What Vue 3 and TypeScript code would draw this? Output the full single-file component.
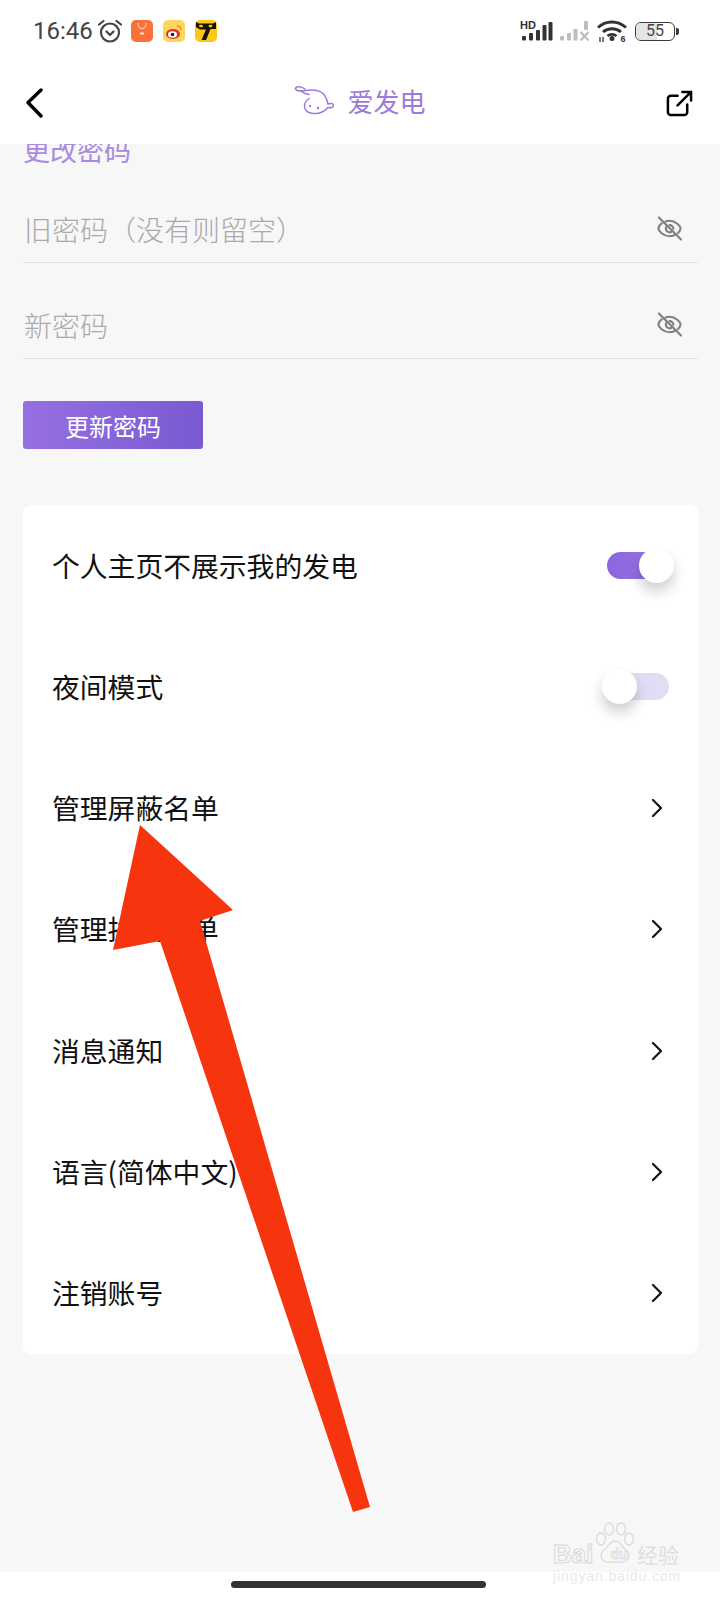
<script setup lang="ts">
const fields = ['旧密码（没有则留空）', '新密码']

const toggles = [
  { label: '个人主页不展示我的发电', on: true },
  { label: '夜间模式', on: false },
]

const links = ['管理屏蔽名单', '管理拦截名单', '消息通知', '语言(简体中文)', '注销账号']
</script>

<template>
  <div class="page">
    <div class="status-bar">
      <div class="status-left">
        <span class="time">16:46</span>
        <svg class="alarm" width="26" height="26" viewBox="0 0 26 26" fill="none" stroke="#444" stroke-width="2.2" stroke-linecap="round" stroke-linejoin="round">
          <circle cx="13" cy="14.5" r="9" />
          <path d="M9.5 13.5l3.5 3.5 3.5-3.5" />
          <path d="M2 6.5l4.5-3.5M24 6.5L19.5 3" />
        </svg>
        <svg class="app-icon" width="22" height="22" viewBox="0 0 22 22">
          <rect width="22" height="22" rx="5" fill="#fa7239" />
          <path d="M7 3c0 4 1.500 5.500 4 5.500S15 7 15 3" fill="none" stroke="#fff" stroke-width="1" opacity=".85" />
          <rect x="9" y="12.500" width="4" height="2" fill="#fff" opacity=".8" />
        </svg>
        <svg class="app-icon" width="22" height="22" viewBox="0 0 22 22">
          <rect width="22" height="22" rx="5" fill="#fbd760" />
          <ellipse cx="10" cy="14" rx="7" ry="5" fill="#e0322c" />
          <ellipse cx="9.500" cy="14.500" rx="4.500" ry="3.200" fill="#fff" />
          <circle cx="9.500" cy="14.500" r="1.800" fill="#222" />
          <path d="M14 6c2.500 0 4 1.500 4 4" fill="none" stroke="#f08a24" stroke-width="1.400" />
        </svg>
        <svg class="app-icon" width="22" height="22" viewBox="0 0 22 22">
          <rect width="22" height="22" rx="5" fill="#fbc914" />
          <path d="M1 2l3 1.500h14L21 2v7h-5.500L11 20H6.500l4.500-10.500H5L1 7z" fill="#15130c" />
          <ellipse cx="6" cy="6" rx="2" ry="1.200" fill="#fbc914" />
          <ellipse cx="15.500" cy="6" rx="2" ry="1.200" fill="#fbc914" />
        </svg>
      </div>
      <div class="status-right">
        <svg width="33" height="22" viewBox="0 0 33 22">
          <text x="0" y="9" class="hd">HD</text>
          <g fill="#333">
            <rect x="2" y="16" width="4" height="4.500" rx="1" />
            <rect x="9" y="13" width="4" height="7.500" rx="1" />
            <rect x="16" y="10" width="4" height="10.500" rx="1" />
            <rect x="22.500" y="5" width="4" height="15.500" rx="1" />
            <rect x="28.500" y="2" width="4" height="18.500" rx="1" />
          </g>
        </svg>
        <svg width="32" height="22" viewBox="0 0 32 22">
          <g fill="#bdbdbd">
            <rect x="1" y="16" width="4" height="4.500" rx="1" />
            <rect x="8" y="13" width="4" height="7.500" rx="1" />
            <rect x="14.500" y="9" width="4" height="11.500" rx="1" />
            <rect x="25" y="1" width="4" height="9" rx="1" />
          </g>
          <path d="M21.500 12l8 8.500M29.500 12l-8 8.500" stroke="#bdbdbd" stroke-width="2.200" />
        </svg>
        <svg width="30" height="24" viewBox="0 0 30 24" fill="none" stroke="#333" stroke-width="3">
          <path d="M1 8.500c7.500-7.500 20-7.500 28 0" />
          <path d="M6 13c5-4.500 13-4.500 18 0" />
          <path d="M10.500 17c2.500-2.200 6.500-2.200 9 0" stroke-width="2.600" />
          <circle cx="15" cy="19.500" r="1" fill="#333" />
          <path d="M3 18v5M6 23v-5" stroke-width="1.300" />
          <text x="23.500" y="23" class="wifi-six">6</text>
        </svg>
        <div class="battery">
          <div class="battery-body">
            <div class="battery-fill"></div>
            <span class="battery-text">55</span>
          </div>
          <div class="battery-nub"></div>
        </div>
      </div>
    </div>

    <div class="nav-bar">
      <svg class="nav-back" width="20" height="30" viewBox="0 0 20 30" fill="none" stroke="#000" stroke-width="3.400" stroke-linecap="round" stroke-linejoin="round">
        <path d="M16 2L3 14.500 16 28" />
      </svg>
      <div class="nav-title">
        <svg width="42" height="32" viewBox="0 0 42 32" fill="none" stroke="#9b7ad8" stroke-width="1.500" stroke-linecap="round" stroke-linejoin="round">
          <path d="M11 5C7 2 2 2 1.500 4.500 1.500 7 6 7.500 12 6.500c7-1 14-.5 18 4 3 3.500 3.500 8 4 9.500 2.500-1 5-.500 5.500 1 .5 2-2.500 3-5.500 2.500-3.500 4-9 6.500-14.500 6-5.500-.5-9-3-9-7.500 0-3 1.500-5.500 4.500-7.500" />
          <path d="M7 6.500c1.500 2 4.500 3.500 8 4" />
          <circle cx="16" cy="22" r=".5" fill="#9b7ad8" />
          <circle cx="24" cy="24" r=".5" fill="#9b7ad8" />
        </svg>
        <span>爱发电</span>
      </div>
      <svg class="nav-share" width="27" height="27" viewBox="0 0 28 28" fill="none" stroke="#000" stroke-width="2.600" stroke-linecap="round" stroke-linejoin="round">
        <path d="M12 6H5a3 3 0 0 0-3 3v14a3 3 0 0 0 3 3h14a3 3 0 0 0 3-3v-8" />
        <path d="M12 16L26 2M17 2h9v9" />
      </svg>
    </div>

    <div class="content">
      <div class="section-title">更改密码</div>
      <div v-for="field in fields" :key="field" class="field">
        <span class="placeholder">{{ field }}</span>
        <svg width="25" height="25" viewBox="0 0 26 26" fill="none" stroke="#7f7f7f" stroke-width="2.200" stroke-linecap="round" stroke-linejoin="round">
          <path d="M5 7.500C2.500 9.500 1.500 11.500 1.500 13c0 2.500 5 8 11.500 8 2.500 0 4.500-.7 6.500-2" />
          <path d="M9 5.800c1.200-.5 2.600-.8 4-.8 6.500 0 11.500 5.500 11.500 8 0 1.300-1 3-2.700 4.600" />
          <path d="M9.500 11.500a4 4 0 0 0 5.500 5M13 9.500a4 4 0 0 1 4 4" />
          <path d="M2 1.500l23 23" />
        </svg>
      </div>
      <button class="update-btn">更新密码</button>

      <div class="card">
        <div v-for="item in toggles" :key="item.label" class="row">
          <span>{{ item.label }}</span>
          <div class="switch" :class="{ on: item.on }">
            <div class="knob"></div>
          </div>
        </div>
        <div v-for="link in links" :key="link" class="row">
          <span>{{ link }}</span>
          <svg class="row-arrow" width="14" height="20" viewBox="0 0 14 20" fill="none" stroke="#111" stroke-width="2.200" stroke-linecap="round" stroke-linejoin="round">
            <path d="M3 2l8 8-8 8" />
          </svg>
        </div>
      </div>
    </div>

    <div class="home-bar">
      <div class="home-pill"></div>
    </div>

    <svg class="arrow" width="720" height="1600" viewBox="0 0 720 1600">
      <polygon points="140,825 233,910 200,921 370,1507 353,1512 160,941 113,950" fill="#f6350f" />
    </svg>

    <div class="watermark">
      <svg class="paw" width="40" height="48" viewBox="0 0 40 48" fill="none" stroke="#dcdcdc" stroke-width="1.300">
        <ellipse cx="6" cy="17" rx="4.500" ry="6" />
        <ellipse cx="14" cy="7" rx="4.500" ry="6" />
        <ellipse cx="26" cy="7" rx="4.500" ry="6" />
        <ellipse cx="34" cy="17" rx="4.500" ry="6" />
        <path d="M20 19c-5 0-6 5-10 8-4 3-5 6-3 10 3 5 9 3 13 3s10 2 13-3c2-4 1-7-3-10-4-3-5-8-10-8z" />
      </svg>
      <div class="wm-main">
        <span class="wm-bai">Bai</span>
        <span class="wm-du">du</span>
        <span class="wm-cn">经验</span>
      </div>
      <div class="wm-url">jingyan.baidu.com</div>
    </div>
  </div>
</template>

<style>
html,
body {
  margin: 0;
  background: #fff;
}
</style>

<style scoped>
.page {
  position: relative;
  width: 720px;
  height: 1600px;
  display: flex;
  flex-direction: column;
  overflow: hidden;
  background: #fff;
  font-family: "Noto Sans CJK SC", "Noto Sans", sans-serif;
}

.status-bar {
  height: 62px;
  flex: none;
  display: flex;
  align-items: center;
  justify-content: space-between;
  padding: 0 41px 0 33px;
}

.status-left,
.status-right {
  display: flex;
  align-items: center;
}

.time {
  font-family: Roboto, sans-serif;
  font-size: 24px;
  color: #444;
  width: 65px;
}

.alarm {
  margin-right: 8px;
  margin-left: -1px;
}

.app-icon {
  margin-right: 10px;
}

.status-right {
  gap: 6px;
}

.hd {
  font-family: "Liberation Sans", sans-serif;
  font-size: 11px;
  font-weight: 700;
  fill: #333;
}

.wifi-six {
  font-family: "Liberation Sans", sans-serif;
  font-size: 9px;
  font-weight: 700;
  fill: #333;
  stroke: none;
}

.battery {
  display: flex;
  align-items: center;
  margin-left: 2px;
}

.battery-body {
  position: relative;
  width: 40px;
  height: 19px;
  box-sizing: border-box;
  border: 1.500px solid #3a3a3a;
  border-radius: 6px;
  overflow: hidden;
}

.battery-fill {
  width: 55%;
  height: 100%;
  background: #e4e4e4;
}

.battery-text {
  position: absolute;
  inset: 0;
  text-align: center;
  font-family: Roboto, sans-serif;
  font-size: 16px;
  line-height: 16px;
  color: #444;
}

.battery-nub {
  width: 3px;
  height: 7px;
  margin-left: 1px;
  background: #3a3a3a;
  border-radius: 0 2px 2px 0;
}

.nav-bar {
  height: 82px;
  flex: none;
  display: flex;
  align-items: center;
  justify-content: space-between;
  padding: 0 27px 0 25px;
  position: relative;
  z-index: 1;
  background: #fff;
}

.nav-title {
  display: flex;
  align-items: center;
  gap: 11px;
  margin: 0 0 6px 9px;
  font-size: 26px;
  color: #9b7ad8;
}

.content {
  flex: 1;
  padding: 0 22px 0 23px;
  background: #f7f7f7;
  overflow: hidden;
}

.section-title {
  height: 28px;
  margin-top: -8px;
  font-size: 27px;
  line-height: 28px;
  color: #a88ae0;
}

.field {
  height: 96px;
  box-sizing: border-box;
  padding: 28px 16px 0 1px;
  display: flex;
  align-items: center;
  justify-content: space-between;
  border-bottom: 1px solid #e3e3e3;
}

.section-title + .field {
  margin-top: 3px;
}

.placeholder {
  font-size: 28px;
  font-weight: 300;
  color: #a9a9a9;
}

.update-btn {
  display: block;
  width: 180px;
  height: 48px;
  margin-top: 42px;
  padding: 0;
  border: none;
  border-radius: 3px;
  background: linear-gradient(90deg, #9670e2, #7a59d2);
  color: #fff;
  font-family: inherit;
  font-size: 24px;
}

.card {
  height: 849px;
  margin-top: 56px;
  background: #fff;
  border-radius: 8px;
  display: flex;
  flex-direction: column;
}

.row {
  flex: 1;
  display: flex;
  align-items: center;
  justify-content: space-between;
  padding: 0 29px 2px 29px;
  font-size: 27.800px;
  color: #111;
}

.row-arrow {
  margin: 2px 5px 0 0;
}

.switch {
  position: relative;
  width: 62px;
  height: 27px;
  margin-top: 2px;
  border-radius: 14px;
  background: #e3dcf6;
}

.switch.on {
  background: linear-gradient(90deg, #8b65df, #9a78e2);
}

.knob {
  position: absolute;
  top: -4px;
  left: -5px;
  width: 35px;
  height: 35px;
  border-radius: 50%;
  background: #fff;
  box-shadow: 0 8px 14px rgba(0, 0, 0, 0.2);
}

.switch.on .knob {
  left: 32px;
}

.home-bar {
  height: 28px;
  flex: none;
  box-sizing: border-box;
  padding: 0 3px 4px 0;
  display: flex;
  align-items: center;
  justify-content: center;
  background: #fff;
}

.home-pill {
  width: 255px;
  height: 7px;
  border-radius: 4px;
  background: #333;
}

.arrow {
  position: absolute;
  top: 0;
  left: 0;
  pointer-events: none;
}

.watermark {
  position: absolute;
  left: 553px;
  top: 1522px;
  width: 130px;
}

.paw {
  position: absolute;
  left: 42px;
  top: 0;
}

.wm-main {
  position: relative;
  height: 24px;
  margin-top: 20px;
  display: flex;
  align-items: center;
  font-family: "Liberation Sans", sans-serif;
  font-weight: 700;
  white-space: nowrap;
}

.wm-bai {
  width: 48px;
  font-size: 26px;
  color: #f7f7f7;
  -webkit-text-stroke: 1px #d8d8d8;
}

.wm-du {
  width: 36px;
  font-size: 14px;
  text-align: center;
  color: #f7f7f7;
  -webkit-text-stroke: 0.6px #d2d2d2;
}

.wm-cn {
  font-family: "Noto Sans CJK SC", sans-serif;
  font-size: 21px;
  font-weight: 400;
  color: #dedede;
}

.wm-url {
  margin-top: 2px;
  font-family: "Liberation Sans", sans-serif;
  font-size: 14px;
  line-height: 16px;
  letter-spacing: 0.9px;
  white-space: nowrap;
  color: #e9e9e9;
}
</style>
